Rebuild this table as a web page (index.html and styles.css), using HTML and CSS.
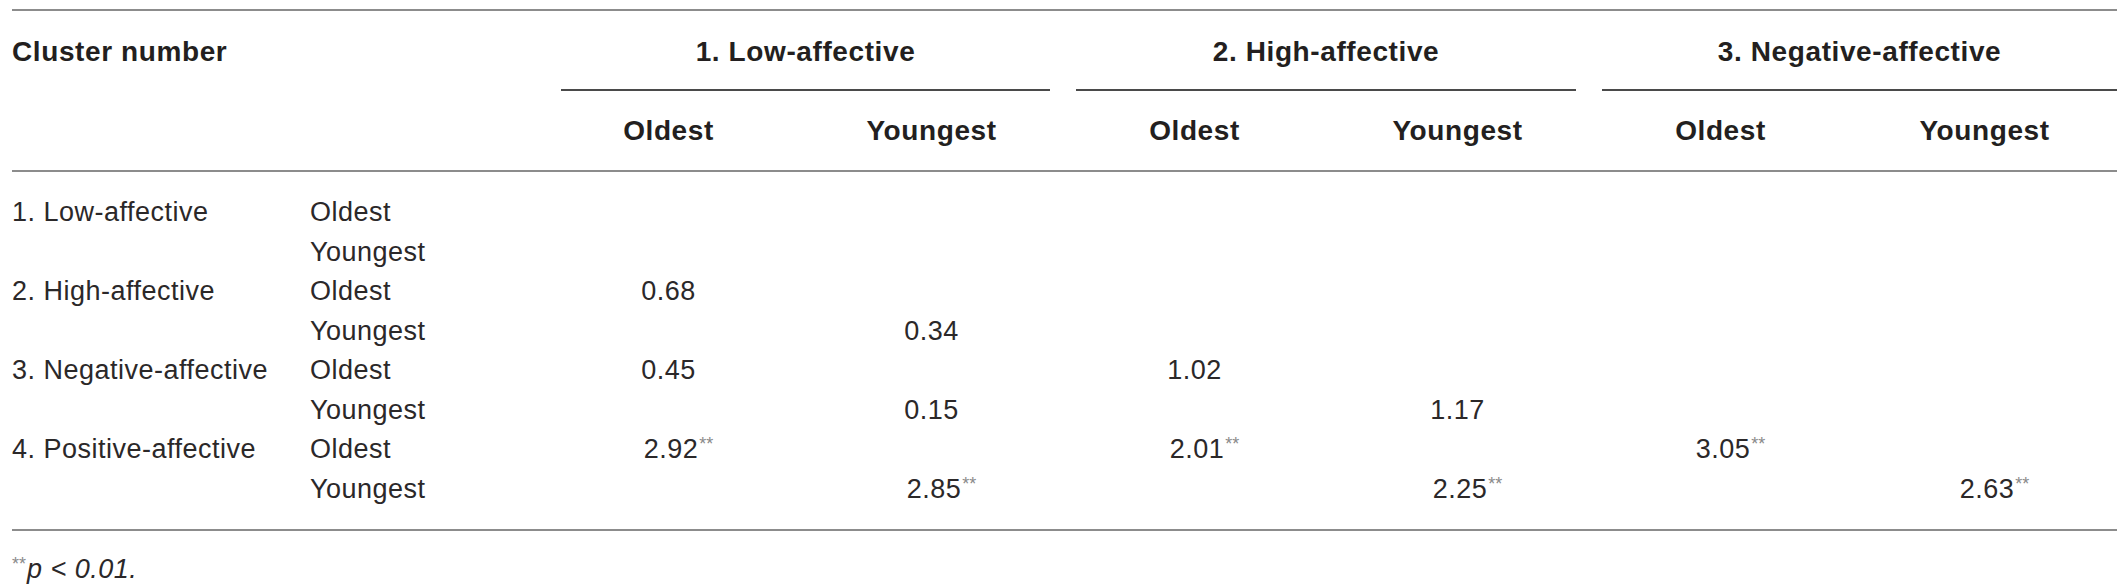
FILE: index.html
```html
<!DOCTYPE html>
<html>
<head>
    <meta name="viewport" content="width=device-width, initial-scale=1.0">
    <link rel="stylesheet" href="styles.css">
</head>
<body>
    <!-- Cluster comparison table -->
    <table class="cluster-table">
        <colgroup>
            <col class="col-name">
            <col class="col-sub">
            <col class="col-val">
            <col class="col-val">
            <col class="col-val">
            <col class="col-val">
            <col class="col-val">
            <col class="col-last">
        </colgroup>
        <thead>
            <tr class="group-row">
                <th class="title" colspan="2" rowspan="2">Cluster number</th>
                <th class="group first" colspan="2"><div class="group-label">1. Low-affective</div></th>
                <th class="group" colspan="2"><div class="group-label">2. High-affective</div></th>
                <th class="group last" colspan="2"><div class="group-label">3. Negative-affective</div></th>
            </tr>
            <tr class="sub-row">
                <th>Oldest</th>
                <th>Youngest</th>
                <th>Oldest</th>
                <th>Youngest</th>
                <th>Oldest</th>
                <th>Youngest</th>
            </tr>
        </thead>
        <tbody>
            <tr class="row-first">
                <td>1. Low-affective</td>
                <td>Oldest</td>
                <td></td><td></td><td></td><td></td><td></td><td></td>
            </tr>
            <tr>
                <td></td>
                <td>Youngest</td>
                <td></td><td></td><td></td><td></td><td></td><td></td>
            </tr>
            <tr>
                <td>2. High-affective</td>
                <td>Oldest</td>
                <td class="val">0.68</td><td></td><td></td><td></td><td></td><td></td>
            </tr>
            <tr>
                <td></td>
                <td>Youngest</td>
                <td></td><td class="val">0.34</td><td></td><td></td><td></td><td></td>
            </tr>
            <tr>
                <td>3. Negative-affective</td>
                <td>Oldest</td>
                <td class="val">0.45</td><td></td><td class="val">1.02</td><td></td><td></td><td></td>
            </tr>
            <tr>
                <td></td>
                <td>Youngest</td>
                <td></td><td class="val">0.15</td><td></td><td class="val">1.17</td><td></td><td></td>
            </tr>
            <tr>
                <td>4. Positive-affective</td>
                <td>Oldest</td>
                <td class="val">2.92<sup>**</sup></td><td></td><td class="val">2.01<sup>**</sup></td><td></td><td class="val">3.05<sup>**</sup></td><td></td>
            </tr>
            <tr class="row-last">
                <td></td>
                <td>Youngest</td>
                <td></td><td class="val">2.85<sup>**</sup></td><td></td><td class="val">2.25<sup>**</sup></td><td></td><td class="val">2.63<sup>**</sup></td>
            </tr>
        </tbody>
    </table>

    <!-- Footnote -->
    <p class="footnote"><sup>**</sup>p &lt; 0.01.</p>
</body>
</html>
```

FILE: styles.css
```css
/* Global */
body {
    font-family: 'Liberation Sans', Arial, sans-serif;
    margin: 0;
    padding: 0;
    background-color: #ffffff;
    color: #231f20;
}

/* Table */
.cluster-table {
    margin: 9px 0 0 12px;
    width: 2105px;
    border-collapse: collapse;
    table-layout: fixed;
    border-top: 2px solid #8c8c8c;
    border-bottom: 2px solid #8c8c8c;
}

.col-name { width: 298px; }
.col-sub { width: 227px; }
.col-val { width: 263px; }
.col-last { width: 265px; }

/* Header */
.cluster-table th {
    font-size: 28px;
    font-weight: bold;
    letter-spacing: 0.6px;
    line-height: 34px;
    padding: 0;
    text-align: center;
    white-space: nowrap;
}

    .cluster-table th.title {
        text-align: left;
        vertical-align: top;
        padding-top: 24px;
        border-bottom: 2px solid #8c8c8c;
    }

.group-row .group {
    padding-top: 24px;
}

.group-label {
    margin: 0 13px;
    padding-bottom: 20px;
    border-bottom: 2px solid #4a4a4a;
}

.group.first .group-label {
    margin-left: 24px;
}

.group.last .group-label {
    margin-right: 0;
}

.sub-row th {
    padding-top: 23px;
    padding-bottom: 22px;
    border-bottom: 2px solid #8c8c8c;
}

/* Body */
.cluster-table td {
    font-size: 27px;
    letter-spacing: 0.5px;
    line-height: 39.5px;
    padding: 0;
    color: #2b2829;
    white-space: nowrap;
}

.row-first td {
    padding-top: 21px;
}

.row-last td {
    padding-bottom: 20px;
}

.cluster-table td.val {
    text-align: center;
}

sup {
    font-size: 18px;
    color: #8a8a8a;
    letter-spacing: 0;
    vertical-align: 8px;
    line-height: 0;
}

    .val sup {
        margin-right: -20px;
        margin-left: 1px;
    }

/* Footnote */
.footnote {
    margin: 21px 0 0 12px;
    font-size: 27px;
    font-style: italic;
    line-height: 34px;
    letter-spacing: 0.5px;
    color: #2b2829;
}

    .footnote sup {
        font-style: normal;
        margin-right: 1px;
    }
```
